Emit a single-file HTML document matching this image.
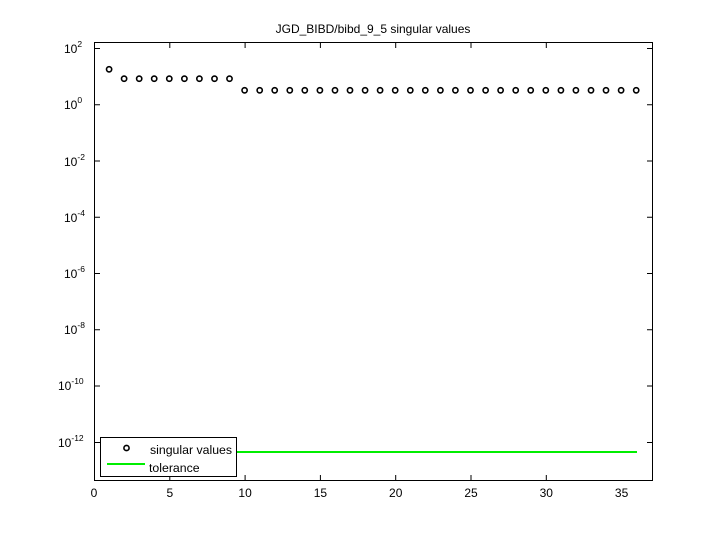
<!DOCTYPE html>
<html><head><style>body{margin:0;background:#fff}svg{display:block}</style></head><body>
<svg width="720" height="540" xmlns="http://www.w3.org/2000/svg" font-family="Liberation Sans, sans-serif" font-size="12">
<rect width="720" height="540" fill="#fff"/>
<text x="373" y="33" text-anchor="middle" font-size="12">JGD_BIBD/bibd_9_5 singular values</text>
<rect x="94.5" y="42.5" width="558" height="438" fill="none" stroke="#000"/>
<g stroke="#000">
<path d="M169.8 480v-5M245.1 480v-5M320.4 480v-5M395.7 480v-5M471 480v-5M546.3 480v-5M169.8 43v5M245.1 43v5M320.4 43v5M395.7 43v5M471 43v5M546.3 43v5"/>
<path d="M95 48.5h5M95 104.7h5M95 161h5M95 217.2h5M95 273.5h5M95 329.7h5M95 386h5M95 442.5h5M652 48.5h-5M652 104.7h-5M652 161h-5M652 217.2h-5M652 273.5h-5M652 329.7h-5M652 386h-5M652 442.5h-5"/>
</g>
<g text-anchor="middle" font-size="12">
<text x="94" y="497">0</text><text x="169.8" y="497">5</text><text x="245.1" y="497">10</text><text x="320.4" y="497">15</text><text x="395.7" y="497">20</text><text x="471" y="497">25</text><text x="546.3" y="497">30</text><text x="621.6" y="497">35</text>
</g>
<g font-size="12">
<text x="64" y="53">10<tspan font-size="8.5" dy="-6">2</tspan></text>
<text x="64" y="109">10<tspan font-size="8.5" dy="-6">0</tspan></text>
<text x="64" y="166">10<tspan font-size="8.5" dy="-6">-2</tspan></text>
<text x="64" y="222">10<tspan font-size="8.5" dy="-6">-4</tspan></text>
<text x="64" y="278">10<tspan font-size="8.5" dy="-6">-6</tspan></text>
<text x="64" y="334">10<tspan font-size="8.5" dy="-6">-8</tspan></text>
<text x="58" y="390">10<tspan font-size="8.5" dy="-6">-10</tspan></text>
<text x="58" y="447">10<tspan font-size="8.5" dy="-6">-12</tspan></text>
</g>
<line x1="236" y1="452" x2="637" y2="452" stroke="#00ee00" stroke-width="2"/>
<g fill="none" stroke="#000" stroke-width="1.6">
<circle cx="109.1" cy="69.3" r="2.6"/>
<circle cx="124.1" cy="78.7" r="2.6"/><circle cx="139.2" cy="78.7" r="2.6"/><circle cx="154.2" cy="78.7" r="2.6"/><circle cx="169.3" cy="78.7" r="2.6"/><circle cx="184.4" cy="78.7" r="2.6"/><circle cx="199.4" cy="78.7" r="2.6"/><circle cx="214.5" cy="78.7" r="2.6"/><circle cx="229.5" cy="78.7" r="2.6"/>
<circle cx="244.6" cy="90.3" r="2.6"/><circle cx="259.7" cy="90.3" r="2.6"/><circle cx="274.7" cy="90.3" r="2.6"/><circle cx="289.8" cy="90.3" r="2.6"/><circle cx="304.8" cy="90.3" r="2.6"/><circle cx="319.9" cy="90.3" r="2.6"/><circle cx="335" cy="90.3" r="2.6"/><circle cx="350" cy="90.3" r="2.6"/><circle cx="365.1" cy="90.3" r="2.6"/><circle cx="380.1" cy="90.3" r="2.6"/><circle cx="395.2" cy="90.3" r="2.6"/><circle cx="410.3" cy="90.3" r="2.6"/><circle cx="425.3" cy="90.3" r="2.6"/><circle cx="440.4" cy="90.3" r="2.6"/><circle cx="455.4" cy="90.3" r="2.6"/><circle cx="470.5" cy="90.3" r="2.6"/><circle cx="485.6" cy="90.3" r="2.6"/><circle cx="500.6" cy="90.3" r="2.6"/><circle cx="515.7" cy="90.3" r="2.6"/><circle cx="530.7" cy="90.3" r="2.6"/><circle cx="545.8" cy="90.3" r="2.6"/><circle cx="560.9" cy="90.3" r="2.6"/><circle cx="575.9" cy="90.3" r="2.6"/><circle cx="591" cy="90.3" r="2.6"/><circle cx="606" cy="90.3" r="2.6"/><circle cx="621.1" cy="90.3" r="2.6"/><circle cx="636.2" cy="90.3" r="2.6"/>
</g>
<rect x="100.5" y="437.5" width="136" height="39" fill="#fff" stroke="#000"/>
<circle cx="126.5" cy="448" r="2.6" fill="none" stroke="#000" stroke-width="1.6"/>
<text x="150" y="454" font-size="12.3">singular values</text>
<line x1="107" y1="464" x2="145" y2="464" stroke="#00ee00" stroke-width="2"/>
<text x="149" y="472" font-size="12.3">tolerance</text>
</svg>
</body></html>
